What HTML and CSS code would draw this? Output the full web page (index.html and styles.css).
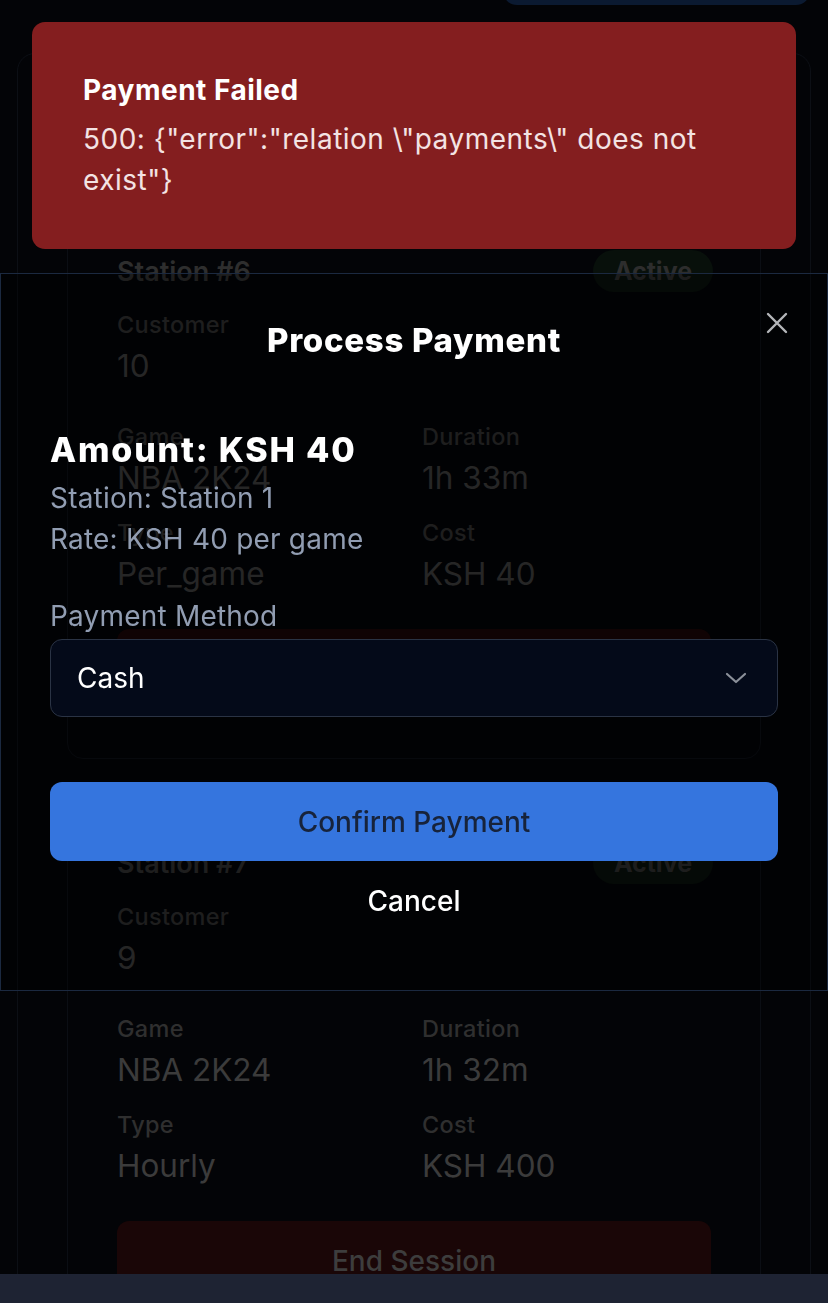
FILE: index.html
```html
<!DOCTYPE html>
<html lang="en">
<head>
<meta charset="utf-8">
<title>Process Payment</title>
<link rel="stylesheet" href="styles.css">
</head>
<body>
<div class="page">
  <header class="topbar">
    <button class="top-btn" type="button"></button>
  </header>

  <section class="panel">
    <h2 class="panel-title">Active Sessions</h2>
    <div class="station-list">
      <article class="station">
        <div class="station-head">
          <h3 class="station-title">Station #6</h3>
          <span class="badge">Active</span>
        </div>
        <div class="field field-customer">
          <div class="field-label">Customer</div>
          <div class="field-value">10</div>
        </div>
        <div class="field-grid">
          <div class="field">
            <div class="field-label">Game</div>
            <div class="field-value">NBA 2K24</div>
          </div>
          <div class="field">
            <div class="field-label">Duration</div>
            <div class="field-value">1h 33m</div>
          </div>
          <div class="field">
            <div class="field-label">Type</div>
            <div class="field-value">Per_game</div>
          </div>
          <div class="field">
            <div class="field-label">Cost</div>
            <div class="field-value">KSH 40</div>
          </div>
        </div>
        <button class="end-btn" type="button">End Session</button>
      </article>

      <article class="station">
        <div class="station-head">
          <h3 class="station-title">Station #7</h3>
          <span class="badge">Active</span>
        </div>
        <div class="field field-customer">
          <div class="field-label">Customer</div>
          <div class="field-value">9</div>
        </div>
        <div class="field-grid">
          <div class="field">
            <div class="field-label">Game</div>
            <div class="field-value">NBA 2K24</div>
          </div>
          <div class="field">
            <div class="field-label">Duration</div>
            <div class="field-value">1h 32m</div>
          </div>
          <div class="field">
            <div class="field-label">Type</div>
            <div class="field-value">Hourly</div>
          </div>
          <div class="field">
            <div class="field-label">Cost</div>
            <div class="field-value">KSH 400</div>
          </div>
        </div>
        <button class="end-btn" type="button">End Session</button>
      </article>
    </div>
  </section>
</div>

<nav class="bottom-bar"></nav>

<div class="modal" role="dialog" aria-labelledby="modal-title">
  <button class="modal-close" type="button" aria-label="Close">
    <svg width="22" height="22" viewBox="0 0 22 22" aria-hidden="true">
      <path d="M2 2 L20 20 M20 2 L2 20" stroke="#b4b6ba" stroke-width="2.4" stroke-linecap="round" fill="none"/>
    </svg>
  </button>
  <h2 class="modal-title" id="modal-title">Process Payment</h2>
  <div class="amount">Amount: KSH 40</div>
  <p class="detail detail-first">Station: Station 1</p>
  <p class="detail">Rate: KSH 40 per game</p>
  <label class="method-label">Payment Method</label>
  <div class="select">
    <span class="select-value">Cash</span>
    <svg class="chevron" width="22" height="12" viewBox="0 0 22 12" aria-hidden="true">
      <path d="M2 2 L11 10 L20 2" stroke="#8b9099" stroke-width="2.2" stroke-linecap="round" stroke-linejoin="round" fill="none"/>
    </svg>
  </div>
  <button class="confirm-btn" type="button">Confirm Payment</button>
  <button class="cancel-btn" type="button">Cancel</button>
</div>

<div class="toast" role="alert">
  <div class="toast-title">Payment Failed</div>
  <div class="toast-desc">500: {"error":"relation \"payments\" does not exist"}</div>
</div>
</body>
</html>
```

FILE: styles.css
```css
* {
  box-sizing: border-box;
}

html, body {
  margin: 0;
  padding: 0;
}

body {
  background: #030407;
  font-family: Inter, "Noto Sans", "Liberation Sans", sans-serif;
  height: 1303px;
  overflow: hidden;
}

button {
  font-family: inherit;
  border: 0;
  cursor: pointer;
}

/* ---------- underlying page ---------- */
.page {
  width: 828px;
}

.topbar {
  display: flex;
  justify-content: flex-end;
  padding-right: 18px;
}

.top-btn {
  width: 307px;
  height: 60px;
  margin-top: -55px;
  background: #0b1a31;
  border-radius: 14px;
}

.panel {
  margin: 48px 17px 0;
  border: 1px solid #0c0f15;
  border-radius: 18px;
  padding: 40px 49px 0;
}

.panel-title {
  margin: 0 0 46px;
  height: 60px;
  line-height: 60px;
  font-size: 34px;
  font-weight: 700;
  color: #1a1a1a;
}

.station-list {
  display: flex;
  flex-direction: column;
  gap: 33px;
}

.station {
  border: 1px solid #0b0e14;
  border-radius: 16px;
  padding: 49px;
}

.station-head {
  display: flex;
  justify-content: space-between;
  align-items: center;
  height: 42px;
}

.station-title {
  margin: 0;
  font-size: 27px;
  font-weight: 600;
  color: #2e2e2e;
}

.badge {
  height: 42px;
  width: 120px;
  margin-right: -2px;
  border-radius: 21px;
  background: #08100b;
  color: #2d2d2d;
  font-size: 25px;
  font-weight: 700;
  display: flex;
  align-items: center;
  justify-content: center;
}

.field-customer {
  margin-top: 18px;
}

.field-label {
  font-size: 23.5px;
  font-weight: 500;
  line-height: 30px;
  letter-spacing: 0.3px;
  color: #2f2f2f;
}

.field-value {
  margin-top: 6px;
  font-size: 31.5px;
  line-height: 40px;
  color: #3b3b3b;
}

.field-grid {
  margin-top: 36px;
  display: grid;
  grid-template-columns: 1fr 1fr;
  column-gap: 16px;
  row-gap: 20px;
}

.end-btn {
  display: block;
  width: 100%;
  margin-top: 35px;
  height: 80px;
  border-radius: 12px;
  background: #1a0607;
  color: #3d3d3d;
  font-size: 28px;
  font-weight: 500;
}

.bottom-bar {
  position: fixed;
  left: 0;
  right: 0;
  bottom: 0;
  height: 29px;
  background: #1e2333;
}

/* ---------- modal ---------- */
.modal {
  position: fixed;
  top: 273px;
  left: 0;
  width: 828px;
  height: 718px;
  border: 1px solid #1b2940;
  background: rgba(0, 0, 0, 0.35);
  padding: 46px 49px 0;
  display: flex;
  flex-direction: column;
}

.modal-close {
  position: absolute;
  top: 37px;
  right: 38px;
  width: 24px;
  height: 24px;
  padding: 1px;
  background: transparent;
  display: flex;
  align-items: center;
  justify-content: center;
}

.modal-title {
  margin: 0;
  text-align: center;
  font-size: 33px;
  font-weight: 800;
  line-height: 40px;
  letter-spacing: 0.7px;
  color: #ffffff;
}

.amount {
  margin-top: 70px;
  font-size: 34px;
  font-weight: 800;
  line-height: 40px;
  letter-spacing: 1.8px;
  color: #ffffff;
}

.detail {
  margin: 0;
  font-size: 28px;
  line-height: 41px;
  letter-spacing: 0.2px;
  color: #919db2;
}

.detail-first {
  margin-top: 8px;
}

.method-label {
  display: block;
  margin-top: 36px;
  margin-bottom: 3px;
  font-size: 28px;
  line-height: 40px;
  letter-spacing: 0.2px;
  color: #919db2;
}

.select {
  height: 78px;
  border: 1.5px solid #2a3344;
  border-radius: 12px;
  background: #040a19;
  padding: 0 30px 0 26px;
  display: flex;
  align-items: center;
  justify-content: space-between;
}

.select-value {
  font-size: 28px;
  color: #ffffff;
}

.confirm-btn {
  margin-top: 65px;
  height: 79px;
  border-radius: 12px;
  background: #3575de;
  color: #17233b;
  font-size: 28px;
  font-weight: 500;
}

.cancel-btn {
  margin-top: 20px;
  height: 40px;
  background: transparent;
  color: #ffffff;
  font-size: 28px;
  font-weight: 500;
}

/* ---------- toast ---------- */
.toast {
  position: fixed;
  top: 22px;
  left: 32px;
  width: 764px;
  height: 227px;
  background: #841e1f;
  border-radius: 13px;
  padding: 48px 51px 0;
}

.toast-title {
  font-size: 28px;
  font-weight: 700;
  line-height: 41px;
  letter-spacing: 0.5px;
  color: #ffffff;
}

.toast-desc {
  margin-top: 8px;
  font-size: 28px;
  line-height: 41px;
  letter-spacing: 0.5px;
  color: #f3e3e3;
}
```
